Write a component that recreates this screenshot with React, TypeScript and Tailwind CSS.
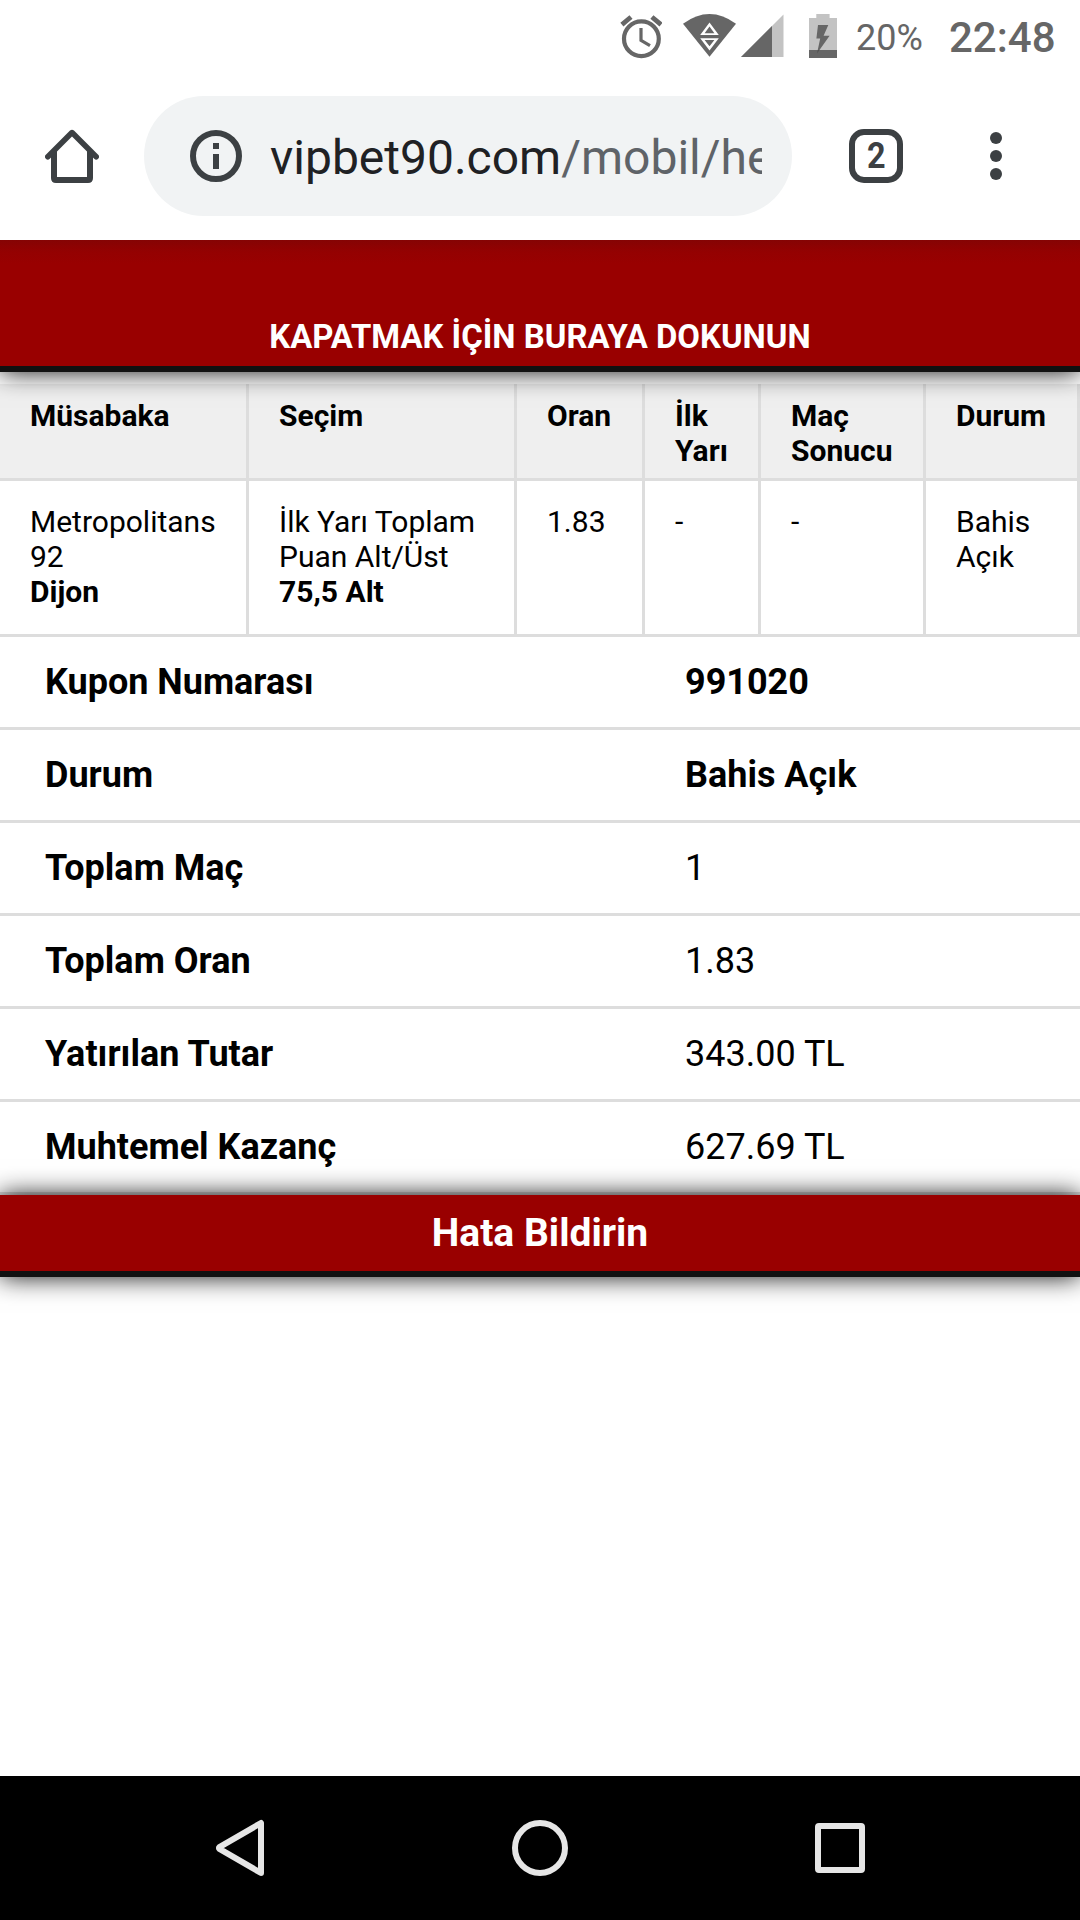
import type { ReactNode } from "react";

const columns = ["Müsabaka", "Seçim", "Oran", "İlk Yarı", "Maç Sonucu", "Durum"];

const summary = [
  { label: "Kupon Numarası", value: "991020", bold: true },
  { label: "Durum", value: "Bahis Açık", bold: true },
  { label: "Toplam Maç", value: "1", bold: false },
  { label: "Toplam Oran", value: "1.83", bold: false },
  { label: "Yatırılan Tutar", value: "343.00 TL", bold: false },
  { label: "Muhtemel Kazanç", value: "627.69 TL", bold: false },
];

function AlarmIcon() {
  return (
    <svg width="42" height="44" viewBox="0 0 42 44" fill="none" stroke="#666666">
      <circle cx="21.4" cy="23.8" r="17.4" strokeWidth="4.2" />
      <path d="M1.9 9.6 L11 2 M41 9.6 L31.9 2" strokeWidth="4.8" />
      <path d="M21 13 V25.4 L30 30.6" strokeWidth="3.2" />
    </svg>
  );
}

function WifiIcon() {
  return (
    <svg width="53" height="43" viewBox="0 0 53 43">
      <path d="M0 9.8 Q26.5 -9.6 53 9.8 L26.5 42.7 Z" fill="#666666" />
      <path d="M26.5 8.6 L35.8 21 H17.2 Z M26.5 36.4 L35.8 24.2 H17.2 Z" fill="white" />
      <path d="M26.5 12.6 L31.4 19.2 H21.6 Z M26.5 32.2 L31.4 26 H21.6 Z" fill="#666666" />
    </svg>
  );
}

function SignalIcon() {
  return (
    <svg width="43" height="43" viewBox="0 0 43 43">
      <path d="M42.5 0.5 V43 H0 Z" fill="#c3c3c3" />
      <path d="M31 12 V43 H0 Z" fill="#666666" />
    </svg>
  );
}

function BatteryIcon() {
  return (
    <svg width="28" height="44" viewBox="0 0 28 44">
      <path d="M7.3 0 H20.6 V4 H28 V44 H0 V4 H7.3 Z" fill="#c3c3c3" />
      <path d="M0 36 H28 V44 H0 Z" fill="#666666" />
      <path d="M9 11 H19.3 L14.6 21.8 H20.6 L8 39.5 L11.2 24.4 H7.4 Z" fill="#666666" />
      <path d="M10.4 36 L8 39.5 L8.8 36 Z" fill="#505050" />
    </svg>
  );
}

function HomeIcon() {
  return (
    <svg width="54" height="56" viewBox="0 0 54 56" fill="none" stroke="#3c4043">
      <path d="M9 22 V49 Q9 51 11 51 H43 Q45 51 45 49 V22" strokeWidth="6" />
      <path d="M2.8 27.8 L27 3.6 L51.2 27.8" strokeWidth="5.6" strokeLinecap="round" strokeLinejoin="round" />
    </svg>
  );
}

function InfoIcon() {
  return (
    <svg width="52" height="52" viewBox="0 0 52 52">
      <circle cx="26" cy="26" r="23" fill="none" stroke="#3c4043" strokeWidth="6" />
      <path d="M23 13 H29 V19 H23 Z M23 24 H29 V39 H23 Z" fill="#3c4043" />
    </svg>
  );
}

function StatusBar() {
  return (
    <div className="flex h-[72px] text-[#666666]">
      <div className="ml-[620px] mt-[15px] w-[42px]"><AlarmIcon /></div>
      <div className="ml-[21px] mt-[14px] w-[53px]"><WifiIcon /></div>
      <div className="ml-[5px] mt-[14px] w-[43px]"><SignalIcon /></div>
      <div className="ml-[25px] mt-[14px] w-[28px]"><BatteryIcon /></div>
      <div className="ml-[19px] mt-[17px] w-[93px] text-[36px] leading-[42px]">20%</div>
      <div className="mt-[13px] text-[42px] font-medium leading-[50px]">22:48</div>
    </div>
  );
}

function AddressBar() {
  return (
    <div className="relative z-20 flex h-[168px] items-center bg-white">
      <div className="ml-[45px] mt-[2px] w-[54px]"><HomeIcon /></div>
      <div className="ml-[45px] flex h-[120px] w-[648px] items-center rounded-full bg-[#f1f3f4] pl-[46px] pr-[30px]">
        <InfoIcon />
        <div className="ml-7 mt-[3px] flex-1 overflow-hidden whitespace-nowrap text-[48px] leading-[60px] text-[#202124]">
          vipbet90.com<span className="text-[#5f6368]">/mobil/hesap</span>
        </div>
      </div>
      <div className="ml-[57px] flex size-[54px] items-center justify-center rounded-[15px] border-[6px] border-[#3c4043] text-[36px] font-bold leading-[42px] text-[#3c4043]">
        <span className="scale-x-90">2</span>
      </div>
      <div className="ml-[87px] flex flex-col gap-[6px]">
        <i className="size-3 rounded-full bg-[#3c4043]" />
        <i className="size-3 rounded-full bg-[#3c4043]" />
        <i className="size-3 rounded-full bg-[#3c4043]" />
      </div>
    </div>
  );
}

function BetTable() {
  return (
    <div className="grid grid-cols-[249px_268px_128px_116px_165px_154px] text-[30px] leading-[35px]">
      {columns.map((name) => (
        <div key={name} className="h-[97px] border-b-[3px] border-r-[3px] border-[#dddddd] bg-[#efefef] pl-[30px] pr-[24px] pt-[14px] font-bold">
          {name}
        </div>
      ))}
      <Cell>
        Metropolitans 92
        <b className="block">Dijon</b>
      </Cell>
      <Cell>
        İlk Yarı Toplam Puan Alt/Üst
        <b className="block">75,5 Alt</b>
      </Cell>
      <Cell>1.83</Cell>
      <Cell>-</Cell>
      <Cell>-</Cell>
      <Cell>Bahis Açık</Cell>
    </div>
  );
}

function Cell({ children }: { children: ReactNode }) {
  return (
    <div className="h-[156px] border-b-[3px] border-r-[3px] border-[#dddddd] pl-[30px] pr-[24px] pt-[23px]">
      {children}
    </div>
  );
}

function NavBar() {
  return (
    <div className="flex h-36 items-center bg-black">
      <svg className="ml-[215px]" width="50" height="58" viewBox="0 0 50 58">
        <path d="M46 4 V54 L4.4 29.8 Q3.4 29 4.4 28.2 Z" fill="none" stroke="#e6e6e6" strokeWidth="6" strokeLinejoin="round" />
      </svg>
      <div className="ml-[247px] size-14 rounded-full border-[6px] border-[#e6e6e6]" />
      <div className="ml-[247px] size-[50px] rounded-[4px] border-[6px] border-[#e6e6e6]" />
    </div>
  );
}

export default function App() {
  return (
    <div className="flex h-[1920px] w-[1080px] flex-col overflow-hidden bg-white font-['Roboto',sans-serif] text-black">
      <StatusBar />
      <AddressBar />
      <div className="relative z-10 h-[132px] border-b-[6px] border-[#111111] bg-[#990000] bg-[linear-gradient(to_bottom,#850404_0px,#940101_12px,#990000_24px)] pt-[77px] text-center text-[32.9px] font-bold leading-[39px] text-white shadow-[0_0_24px_#111111]">
        KAPATMAK İÇİN BURAYA DOKUNUN
      </div>
      <div className="h-3" />
      <BetTable />
      {summary.map((row) => (
        <div key={row.label} className="flex h-[93px] items-center border-b-[3px] border-[#dddddd] pl-[45px] text-[36px] leading-[42px]">
          <div className="w-[640px] font-bold">{row.label}</div>
          <div className={row.bold ? "font-bold" : "font-normal"}>{row.value}</div>
        </div>
      ))}
      <div className="relative z-10 h-[82px] border-b-[6px] border-[#111111] bg-[#990000] pt-[15px] text-center text-[39px] font-bold leading-[46px] text-white shadow-[0_0_24px_#111111]">
        Hata Bildirin
      </div>
      <div className="flex-1" />
      <NavBar />
    </div>
  );
}
